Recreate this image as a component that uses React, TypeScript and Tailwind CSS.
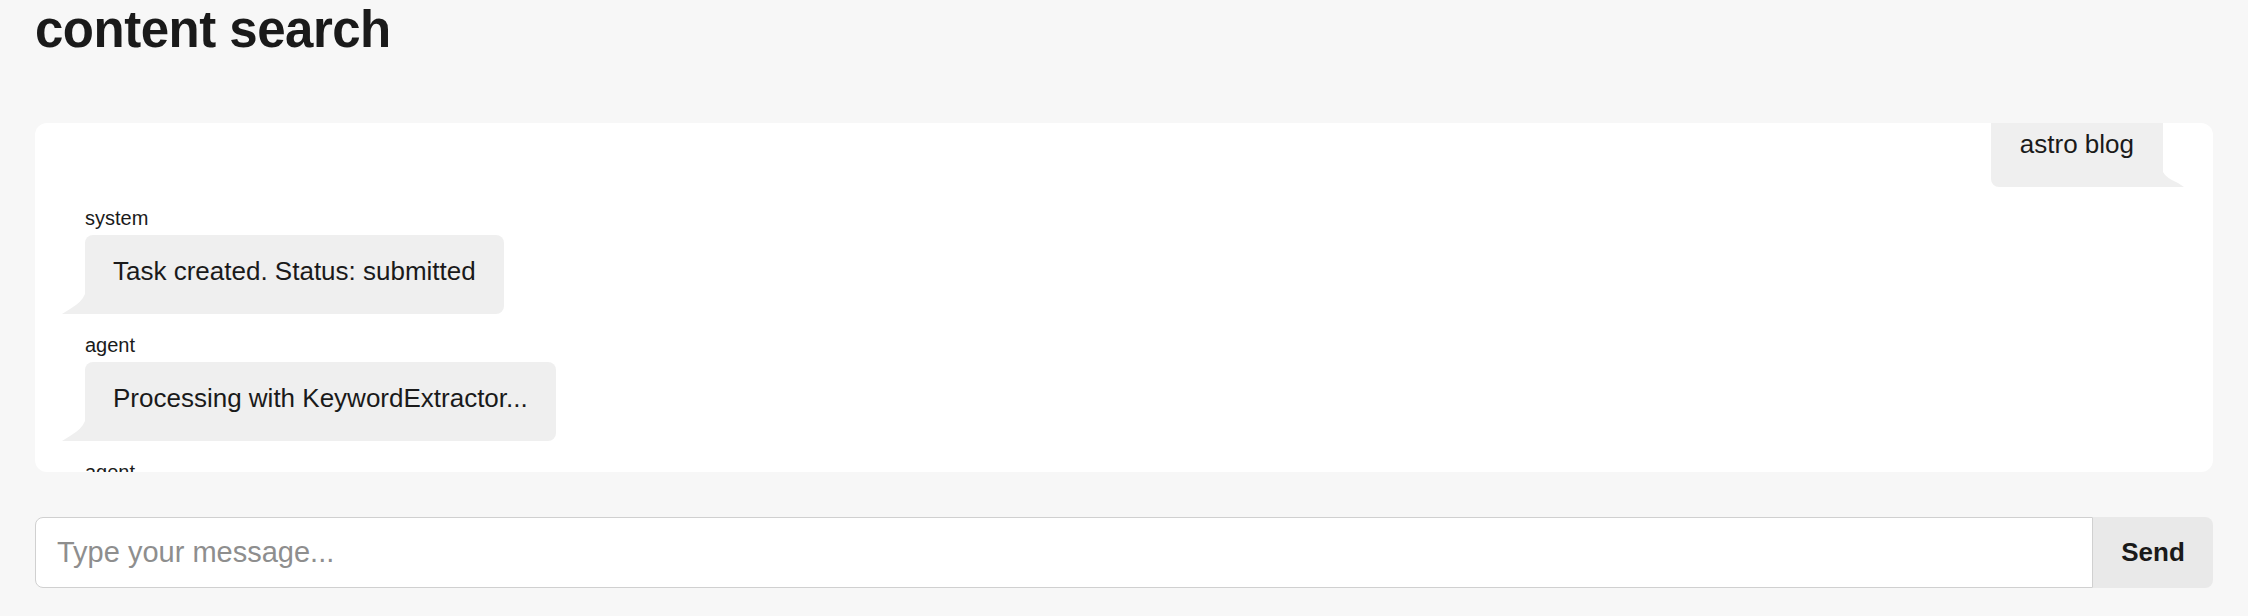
type Message = {
  role: "user" | "system" | "agent";
  text: string;
};

const messages: Message[] = [
  { role: "user", text: "astro blog" },
  { role: "system", text: "Task created. Status: submitted" },
  { role: "agent", text: "Processing with KeywordExtractor..." },
  { role: "agent", text: "Extracted keywords: astro, blog" },
];

function Bubble({ message }: { message: Message }) {
  const mine = message.role === "user";
  return (
    <div className={mine ? "flex flex-col items-end" : "flex flex-col items-start"}>
      <div className="text-[20px] leading-[23px] text-[#1a1a1a]">{message.role}</div>
      <div
        className={
          mine
            ? "relative mt-[5px] rounded-[8px] rounded-br-none bg-[#efefef] px-[29px] pt-[21px] pb-[27px] text-[26px] leading-[31px]"
            : "relative mt-[5px] rounded-[8px] rounded-bl-none bg-[#efefef] px-[28px] pt-[21px] pb-[27px] text-[26px] leading-[31px]"
        }
      >
        {message.text}
        {mine ? (
          <svg className="absolute bottom-0 -right-[21px] h-[15px] w-[22px]" viewBox="0 0 22 15">
            <path d="M0 0 L1 0 Q4 6 16 11 L22 15 L0 15 Z" fill="#efefef" />
          </svg>
        ) : (
          <svg className="absolute bottom-0 -left-[23px] h-[20px] w-[24px]" viewBox="0 0 24 20">
            <path d="M24 0 L23 0 Q20 8 8 15 L0 20 L24 20 Z" fill="#efefef" />
          </svg>
        )}
      </div>
    </div>
  );
}

export default function App() {
  return (
    <div className="min-h-screen bg-[#f7f7f7] px-[35px] font-['Liberation_Sans',Arial,sans-serif] text-[#1a1a1a]">
      <h1 className="text-[51px] leading-[60px] font-bold tracking-[-0.5px]">content search</h1>

      <div className="mt-[63px] h-[349px] overflow-hidden rounded-[12px] bg-white px-[50px]">
        <div className="-mt-[43px] flex flex-col gap-[20px]">
          {messages.map((m, i) => (
            <Bubble key={i} message={m} />
          ))}
        </div>
      </div>

      <form className="mt-[45px] flex h-[71px]" onSubmit={(e) => e.preventDefault()}>
        <input
          type="text"
          placeholder="Type your message..."
          className="min-w-0 flex-1 rounded-l-[8px] border border-[#d0d0d0] bg-white px-[21px] text-[29px] outline-none placeholder:text-[#8e8e8e]"
        />
        <button type="submit" className="w-[120px] rounded-r-[8px] bg-[#e9e9e9] text-[26px] font-bold text-[#1a1a1a]">
          Send
        </button>
      </form>
    </div>
  );
}
